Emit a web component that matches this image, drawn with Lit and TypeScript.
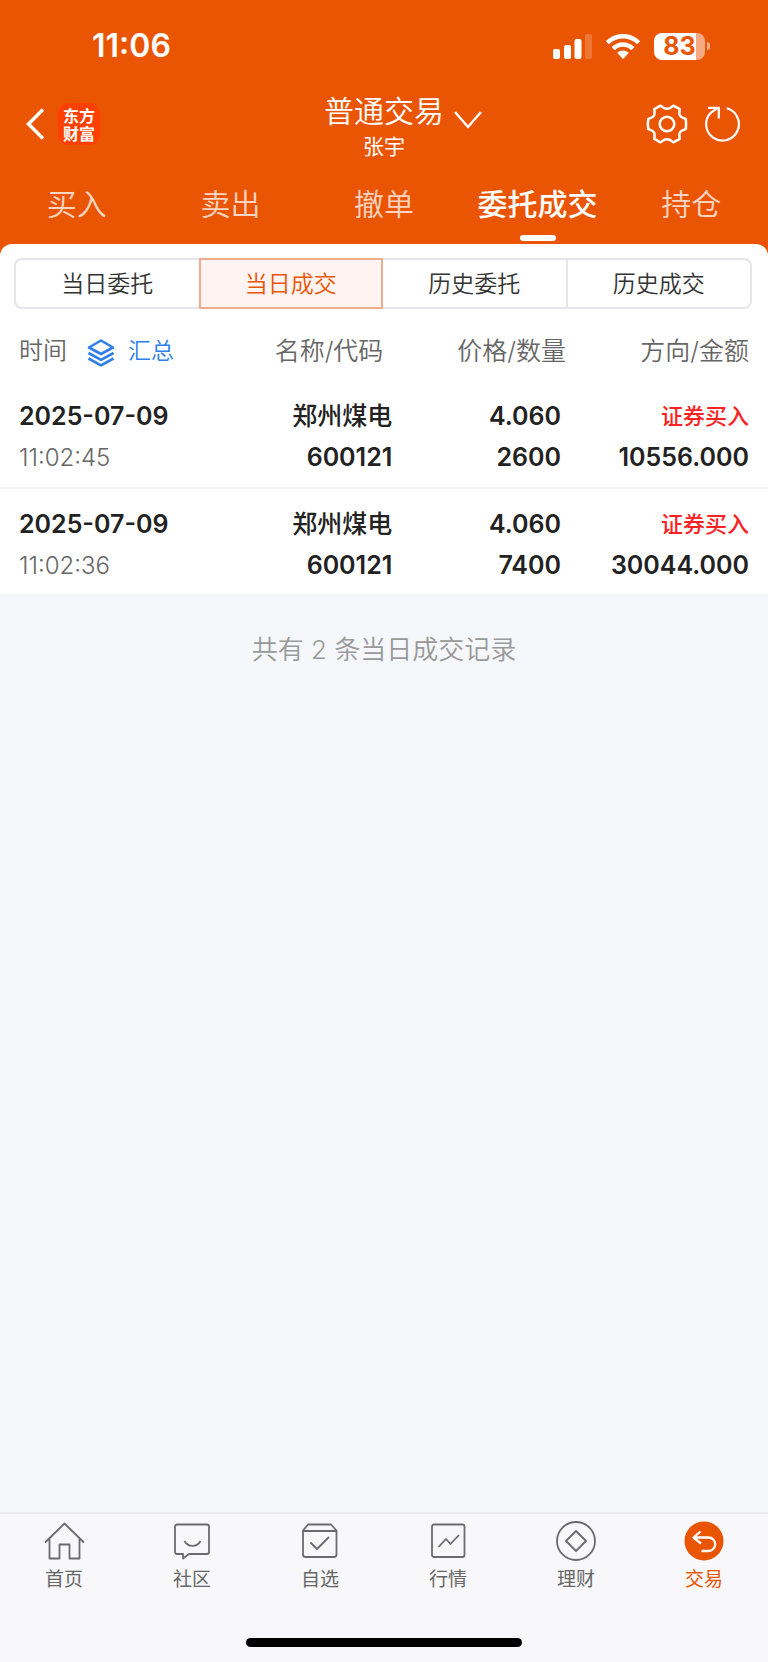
import { LitElement, html, css, svg } from "lit";
import { customElement, property, state } from "lit/decorators.js";
import { classMap } from "lit/directives/class-map.js";

const FONT = css`"Inter", "Noto Sans CJK SC", sans-serif`;

const reset = css`
  * {
    box-sizing: border-box;
  }
  button {
    margin: 0;
    padding: 0;
    border: 0;
    background: none;
    font: inherit;
    color: inherit;
    cursor: pointer;
  }
  a {
    color: inherit;
    text-decoration: none;
  }
  svg {
    display: block;
    flex: none;
  }
`;

interface Deal {
  date: string;
  time: string;
  name: string;
  code: string;
  price: string;
  quantity: string;
  side: string;
  amount: string;
}

const DEALS: Deal[] = [
  { date: "2025-07-09", time: "11:02:45", name: "郑州煤电", code: "600121", price: "4.060", quantity: "2600", side: "证券买入", amount: "10556.000" },
  { date: "2025-07-09", time: "11:02:36", name: "郑州煤电", code: "600121", price: "4.060", quantity: "7400", side: "证券买入", amount: "30044.000" },
];

@customElement("status-bar")
export class StatusBar extends LitElement {
  static styles = [
    reset,
    css`
      :host {
        display: flex;
        justify-content: space-between;
        align-items: center;
        height: 92px;
        padding: 0 58px 0 92px;
      }
      .clock {
        font-size: 32px;
        line-height: 40px;
        font-weight: 600;
      }
      .signs {
        display: flex;
        align-items: center;
        gap: 14px;
      }
      .battery {
        display: flex;
        align-items: center;
        gap: 2px;
      }
      .cell {
        display: flex;
        align-items: center;
        justify-content: center;
        width: 51px;
        height: 27px;
        border-radius: 8px;
        background: linear-gradient(to right, #fff 83%, #f5aa82 83%);
        color: #ea5504;
        font-size: 25px;
        line-height: 27px;
        font-weight: 700;
      }
      .nub {
        width: 3px;
        height: 8px;
        border-radius: 0 4px 4px 0;
        background: #f5aa82;
      }
    `,
  ];

  render() {
    return html`
      <time class="clock">11:06</time>
      <div class="signs">
        <svg width="39" height="25" viewBox="0 0 39 25" fill="#fff">
          <rect x="0" y="15" width="7" height="10" rx="2" />
          <rect x="11" y="11" width="7" height="14" rx="2" />
          <rect x="21.500" y="5" width="7" height="20" rx="2" />
          <rect x="32" y="0" width="7" height="25" rx="2" opacity="0.2" />
        </svg>
        <svg width="34" height="25" viewBox="0 0 34 25" fill="#fff">
          <path d="M17 0C10.400 0 4.500 2.600.300 6.700a.8.8 0 0 0 0 1.100l2 2a.8.8 0 0 0 1.100 0C7 6.500 11.800 4.500 17 4.500s10 2 13.600 5.300a.8.8 0 0 0 1.100 0l2-2a.8.8 0 0 0 0-1.100C29.500 2.600 23.600 0 17 0Z" />
          <path d="M17 8.200c-4.200 0-8 1.600-10.900 4.300a.8.8 0 0 0 0 1.200l2.100 2a.8.8 0 0 0 1.100 0c2-1.900 4.700-3 7.700-3s5.700 1.100 7.700 3a.8.8 0 0 0 1.100 0l2.100-2a.8.8 0 0 0 0-1.200C25 9.800 21.200 8.200 17 8.200Z" />
          <path d="M17 16.400c-2 0-3.800.700-5.200 1.900a.8.8 0 0 0 0 1.200l4.600 5a.8.8 0 0 0 1.200 0l4.600-5a.8.8 0 0 0 0-1.200A8 8 0 0 0 17 16.400Z" />
        </svg>
        <div class="battery"><span class="cell">83</span><span class="nub"></span></div>
      </div>
    `;
  }
}

@customElement("trade-header")
export class TradeHeader extends LitElement {
  static styles = [
    reset,
    css`
      :host {
        display: grid;
        grid-template-columns: 1fr auto 1fr;
        align-items: center;
        height: 72px;
        padding: 0 26px;
      }
      .left,
      .right,
      .tools {
        display: flex;
        align-items: center;
      }
      .left,
      .right {
        padding-bottom: 8px;
      }
      .left {
        gap: 14px;
      }
      .logo {
        display: grid;
        place-content: center;
        width: 42px;
        height: 42px;
        border-radius: 10px;
        background: #ff4000;
        font-family: "Noto Sans CJK SC", sans-serif;
        font-size: 16px;
        line-height: 18px;
        font-weight: 700;
      }
      .title {
        text-align: center;
      }
      h1 {
        margin: 0;
        font-size: 30px;
        line-height: 38px;
        font-weight: 350;
      }
      .name {
        margin: 0;
        font-size: 21px;
        line-height: 34px;
      }
      .right {
        justify-content: space-between;
        padding-left: 10px;
      }
      .account {
        padding-bottom: 8px;
      }
      .tools {
        gap: 16px;
      }
    `,
  ];

  render() {
    return html`
      <div class="left">
        <button aria-label="返回">
          <svg width="18" height="32" viewBox="0 0 18 32" fill="none" stroke="#fff" stroke-width="3.500">
            <path d="M17 1.500 2.500 16 17 30.500" />
          </svg>
        </button>
        <div class="logo"><span>东方</span><span>财富</span></div>
      </div>
      <div class="title">
        <h1>普通交易</h1>
        <p class="name">张宇</p>
      </div>
      <div class="right">
        <button class="account" aria-label="切换账户">
          <svg width="28" height="18" viewBox="0 0 28 18" fill="none" stroke="#fff" stroke-width="2.400">
            <path d="M1 1 14 16 27 1" />
          </svg>
        </button>
        <div class="tools">
          <button aria-label="设置">
            <svg width="42" height="42" viewBox="-21 -21 42 42" fill="none" stroke="#fff" stroke-width="2.500" stroke-linejoin="round">
              <path d="M-6.500-18.300C-4.500-17.500-4-15.200 0-15.200S4.500-17.500 6.500-18.300L12.700-14.900C13-12.500 11.400-11 13-8.400S17-6.200 18.800-5Q19.400 0 18.800 5C17 6.200 14.600 5.800 13 8.400S13 12.500 12.700 14.900L6.500 18.300C4.500 17.500 4 15.200 0 15.200S-4.500 17.500-6.500 18.300L-12.700 14.900C-13 12.500-11.400 11-13 8.400S-17 6.200-18.800 5Q-19.400 0-18.800-5C-17-6.200-14.600-5.800-13-8.400S-13-12.500-12.700-14.900Z" />
              <circle r="7.300" />
            </svg>
          </button>
          <button aria-label="刷新">
            <svg width="38" height="42" viewBox="-19 -21 38 42" fill="none" stroke="#fff" stroke-width="2.200">
              <path d="M3.700-15.700A16.400 16.400 0 1 1-12-11.500L-5-16.200M-15-16.200H-4.200V-5.500" />
            </svg>
          </button>
        </div>
      </div>
    `;
  }
}

@customElement("trade-tabs")
export class TradeTabs extends LitElement {
  @state() private current = "委托成交";

  static styles = [
    reset,
    css`
      :host {
        display: grid;
        grid-template-columns: repeat(5, 1fr);
        height: 80px;
      }
      .tab {
        display: flex;
        flex-direction: column;
        align-items: center;
        padding-top: 20px;
        gap: 10px;
        color: #fbd5c2;
        font-size: 30px;
        line-height: 41px;
        font-weight: 350;
        white-space: nowrap;
      }
      .on {
        color: #fff;
        font-weight: 500;
      }
      .on::after {
        content: "";
        width: 36px;
        height: 6px;
        border-radius: 3px;
        background: #fff;
      }
    `,
  ];

  render() {
    return ["买入", "卖出", "撤单", "委托成交", "持仓"].map(
      (label) => html`
        <button class=${classMap({ tab: true, on: label === this.current })} @click=${() => (this.current = label)}>${label}</button>
      `
    );
  }
}

@customElement("range-switch")
export class RangeSwitch extends LitElement {
  @state() private current = "当日成交";

  static styles = [
    reset,
    css`
      :host {
        display: grid;
        grid-template-columns: repeat(4, 1fr);
        margin: 0 16px 0 14px;
      }
      .item {
        height: 51px;
        padding-top: 2px;
        border: 2px solid #e5e5ea;
        border-left-width: 0;
        color: #333;
        font-size: 23px;
        line-height: 45px;
        font-weight: 350;
      }
      .item:first-child {
        border-left-width: 2px;
        border-radius: 8px 0 0 8px;
      }
      .item:last-child {
        border-radius: 0 8px 8px 0;
      }
      .before {
        border-right-width: 0;
      }
      .on {
        border: 2px solid #efab8d;
        background: #fff4f1;
        color: #ea5504;
      }
    `,
  ];

  render() {
    const labels = ["当日委托", "当日成交", "历史委托", "历史成交"];
    return labels.map(
      (label, i) => html`
        <button
          class=${classMap({ item: true, on: label === this.current, before: labels[i + 1] === this.current })}
          @click=${() => (this.current = label)}
        >${label}</button>
      `
    );
  }
}

@customElement("deal-table")
export class DealTable extends LitElement {
  @property({ attribute: false }) deals: Deal[] = [];

  static styles = [
    reset,
    css`
      :host {
        display: block;
      }
      table {
        width: 100%;
        border-collapse: collapse;
        table-layout: fixed;
        text-align: right;
      }
      th,
      td {
        padding: 0;
        white-space: nowrap;
      }
      th {
        width: 26%;
        height: 72px;
        padding-top: 12px;
        color: #666;
        font-size: 25px;
        line-height: 36px;
        font-weight: 350;
      }
      th:nth-child(2) {
        padding-right: 16px;
      }
      th:nth-child(3) {
        width: 23%;
        padding-right: 10px;
      }
      th:last-child {
        width: 25%;
      }
      tr > :first-child {
        padding-left: 19px;
        text-align: left;
      }
      tr > :last-child {
        padding-right: 19px;
      }
      td {
        height: 107px;
        padding-top: 6px;
        border-bottom: 2px solid #f6f6f8;
        color: #222;
        font-size: 25px;
        line-height: 41px;
        font-weight: 600;
      }
      td:nth-child(2) {
        padding-right: 7px;
      }
      td:nth-child(3) {
        padding-right: 15px;
      }
      .heading {
        display: flex;
        align-items: center;
        gap: 20px;
        font-size: 24px;
      }
      .sum {
        display: flex;
        align-items: center;
        gap: 13px;
        color: #2e7fe8;
        font-size: 23px;
      }
      .line {
        display: block;
      }
      .stock {
        font-weight: 500;
      }
      .time {
        color: #666;
        font-size: 24px;
        font-weight: 350;
      }
      .side {
        color: #fb2224;
        font-size: 22px;
        font-weight: 500;
      }
    `,
  ];

  render() {
    return html`
      <table>
        <thead>
          <tr>
            <th>
              <div class="heading">
                <span>时间</span>
                <button class="sum">
                  <svg width="28" height="32" viewBox="0 -4 28 32" fill="none" stroke="#2e7fe8" stroke-width="2.600" stroke-linejoin="round">
                    <path d="M14 1.500 26 8.500 14 15 2 8.500ZM1.500 14 14 20.800 26.500 14M1.500 19.500 14 26.300 26.500 19.500" />
                  </svg>
                  <span>汇总</span>
                </button>
              </div>
            </th>
            <th>名称/代码</th>
            <th>价格/数量</th>
            <th>方向/金额</th>
          </tr>
        </thead>
        <tbody>
          ${this.deals.map(
            (d) => html`
              <tr>
                <td><span class="line">${d.date}</span><span class="line time">${d.time}</span></td>
                <td><span class="line stock">${d.name}</span><span class="line">${d.code}</span></td>
                <td><span class="line">${d.price}</span><span class="line">${d.quantity}</span></td>
                <td><span class="line side">${d.side}</span><span class="line">${d.amount}</span></td>
              </tr>
            `
          )}
        </tbody>
      </table>
    `;
  }
}

const NAV = [
  {
    label: "首页",
    icon: svg`<path d="M1 20.500 20.500 1.500 40 20.500M5.500 17V36.500H15.500V22.500H25.500V36.500H35.500V17" />`,
  },
  {
    label: "社区",
    icon: svg`<path d="M5 2.500H35a2 2 0 0 1 2 2V30a2 2 0 0 1-2 2H17L11 36.500V32H5a2 2 0 0 1-2-2V4.500a2 2 0 0 1 2-2ZM12.500 19C16 25.500 25 25.500 28.500 19" />`,
  },
  {
    label: "自选",
    icon: svg`<path d="M8 2.500H31L36.500 8.500V32.500a2.500 2.500 0 0 1-2.500 2.500H5.500a2.500 2.500 0 0 1-2.500-2.500V8.500ZM3 9H36.500M10.500 20.500 17 27 29 15" />`,
  },
  {
    label: "行情",
    icon: svg`<rect x="4" y="2.500" width="32.500" height="32.500" rx="2" /><path d="M10.500 25 18 17 22.500 22 31 13" />`,
  },
  {
    label: "理财",
    icon: svg`<circle cx="20" cy="19" r="19" /><path d="M20 9 30 19 20 29 10 19Z" />`,
  },
  {
    label: "交易",
    icon: svg`<circle cx="20" cy="19" r="19.500" fill="#ea5504" stroke="none" /><path stroke="#fff" stroke-width="2.300" d="M16.500 9.500 9.500 15.500 17 21.500M9.500 15.500H24.500a6.500 6.500 0 0 1 0 13.500H17.500" />`,
  },
];

@customElement("bottom-nav")
export class BottomNav extends LitElement {
  static styles = [
    reset,
    css`
      :host {
        display: block;
        border-top: 2px solid #ebebed;
        background: #f8f8fb;
      }
      nav {
        display: grid;
        grid-template-columns: repeat(6, 1fr);
        height: 124px;
        padding-top: 8px;
      }
      .item {
        display: flex;
        flex-direction: column;
        align-items: center;
        gap: 5px;
        color: #666;
        font-size: 19px;
        line-height: 30px;
      }
      .on {
        color: #ea5504;
      }
      .handle {
        width: 36%;
        height: 9px;
        margin: 0 auto 15px;
        border-radius: 5px;
        background: #000;
      }
      svg {
        overflow: visible;
      }
    `,
  ];

  render() {
    return html`
      <nav>
        ${NAV.map(
          (n) => html`
            <a class=${classMap({ item: true, on: n.label === "交易" })} href="#">
              <svg width="40" height="38" viewBox="0 0 40 38" fill="none" stroke="#6b6b6d" stroke-width="1.800" stroke-linejoin="round">${n.icon}</svg>
              <span>${n.label}</span>
            </a>
          `
        )}
      </nav>
      <div class="handle"></div>
    `;
  }
}

@customElement("app-root")
export class AppRoot extends LitElement {
  static styles = [
    reset,
    css`
      :host {
        display: flex;
        flex-direction: column;
        min-height: 100vh;
        background: #f6f7fa;
        font-family: ${FONT};
      }
      .top {
        background: #ea5504;
        color: #fff;
      }
      .sheet {
        padding-top: 14px;
        border-radius: 12px 12px 0 0;
        background: #fff;
      }
      main {
        flex: 1;
      }
      .backing {
        background: linear-gradient(#ea5504 20px, #fff 20px);
      }
      .total {
        margin: 0;
        padding-top: 34px;
        color: #999;
        font-size: 26px;
        line-height: 40px;
        font-weight: 350;
        text-align: center;
      }
    `,
  ];

  render() {
    return html`
      <header class="top">
        <status-bar></status-bar>
        <trade-header></trade-header>
        <trade-tabs></trade-tabs>
      </header>
      <main>
        <div class="backing">
          <div class="sheet">
            <range-switch></range-switch>
            <deal-table .deals=${DEALS}></deal-table>
          </div>
        </div>
        <p class="total">共有 ${DEALS.length} 条当日成交记录</p>
      </main>
      <bottom-nav></bottom-nav>
    `;
  }
}
